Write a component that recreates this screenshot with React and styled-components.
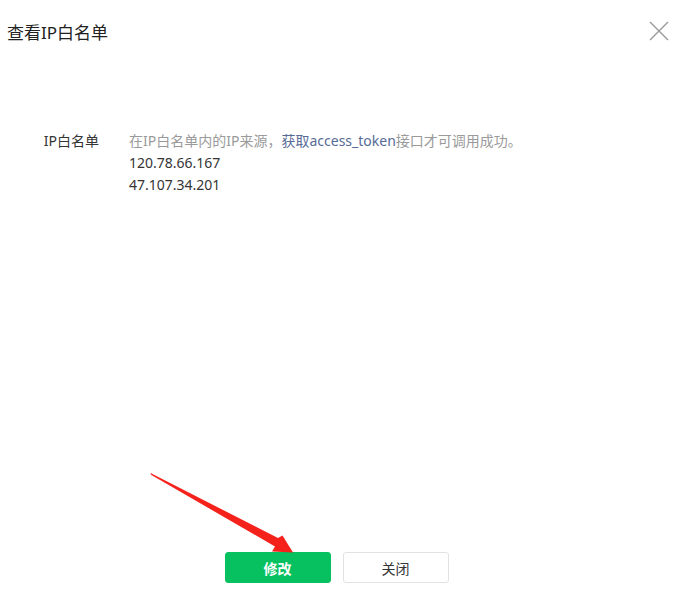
import React from 'react'
import styled, { createGlobalStyle } from 'styled-components'

const GlobalStyle = createGlobalStyle`
  html, body {
    margin: 0;
    padding: 0;
    background: #fff;
  }
  body {
    font-family: "Noto Sans", "Noto Sans CJK SC", sans-serif;
    color: #353535;
  }
`

const Dialog = styled.div`
  position: relative;
  width: 691px;
  height: 606px;
  display: flex;
  flex-direction: column;
  background: #fff;
  overflow: hidden;
`

const Header = styled.div`
  display: flex;
  align-items: center;
  justify-content: space-between;
  height: 62px;
  padding: 0 22px 0 7px;
`

const Title = styled.h3`
  margin: 0;
  font-size: 17px;
  font-weight: 400;
  color: #222;
`

const CloseIcon = styled.button`
  width: 20px;
  height: 20px;
  padding: 0;
  border: 0;
  background: none;
  cursor: pointer;
  svg { display: block; }
`

const Body = styled.div`
  flex: 1;
  padding-top: 68px;
`

const FormRow = styled.div`
  display: flex;
  gap: 30px;
  font-size: 14px;
  line-height: 22px;
`

const Label = styled.div`
  width: 99px;
  text-align: right;
  color: #353535;
`

const Field = styled.div`
  display: flex;
  flex-direction: column;
`

const Tips = styled.p`
  margin: 0;
  color: #9a9a9a;
  font-size: 14px;
`

const Link = styled.a`
  color: #576b95;
  text-decoration: none;
`

const Ip = styled.div`
  color: #353535;
`

const Footer = styled.div`
  display: flex;
  justify-content: center;
  gap: 12px;
  padding: 0 18px 23px 0;
`

const Button = styled.button`
  width: 106px;
  height: 31px;
  border-radius: 3px;
  font-family: inherit;
  font-size: 14px;
  cursor: pointer;
  border: 1px solid ${p => (p.$primary ? '#07c160' : '#e2e2e2')};
  background: ${p => (p.$primary ? '#07c160' : '#fff')};
  color: ${p => (p.$primary ? '#fff' : '#353535')};
  font-weight: ${p => (p.$primary ? 700 : 400)};
`

const Arrow = styled.svg`
  position: absolute;
  left: 0;
  top: 0;
  pointer-events: none;
`

export default function App() {
  return (
    <>
      <GlobalStyle />
      <Dialog>
        <Header>
          <Title>查看IP白名单</Title>
          <CloseIcon aria-label="关闭">
            <svg width="20" height="20" viewBox="0 0 20 20">
              <path d="M1 1L19 19M19 1L1 19" stroke="#9a9a9a" strokeWidth="1.4" />
            </svg>
          </CloseIcon>
        </Header>
        <Body>
          <FormRow>
            <Label>IP白名单</Label>
            <Field>
              <Tips>
                在IP白名单内的IP来源，<Link href="#">获取access_token</Link>接口才可调用成功。
              </Tips>
              <Ip>120.78.66.167</Ip>
              <Ip>47.107.34.201</Ip>
            </Field>
          </FormRow>
        </Body>
        <Footer>
          <Button $primary>修改</Button>
          <Button>关闭</Button>
        </Footer>
        <Arrow width="691" height="606" viewBox="0 0 691 606">
          <path
            d="M150.5 473 L278 538 L282.5 535.5 L293 552.5 L272 551.5 L275 546.5 L151 474.8 Z"
            fill="#f5221b"
          />
        </Arrow>
      </Dialog>
    </>
  )
}
